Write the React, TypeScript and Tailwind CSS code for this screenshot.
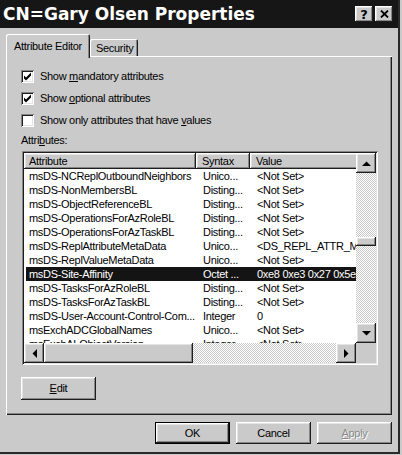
const raised =
  'shadow-[inset_-1px_-1px_#1e1e1e,inset_1px_1px_#ffffff,inset_-2px_-2px_#868686,inset_2px_2px_#e4e4e4]';
const sunken =
  'shadow-[inset_1px_1px_#868686,inset_-1px_-1px_#ffffff,inset_2px_2px_#1e1e1e,inset_-2px_-2px_#e4e4e4]';
const checker =
  'bg-[repeating-conic-gradient(#cacaca_0%_25%,#ffffff_0%_50%)] [background-size:2px_2px]';

const rows = [
  { name: 'msDS-NCReplOutboundNeighbors', syntax: 'Unico...', value: '<Not Set>' },
  { name: 'msDS-NonMembersBL', syntax: 'Disting...', value: '<Not Set>' },
  { name: 'msDS-ObjectReferenceBL', syntax: 'Disting...', value: '<Not Set>' },
  { name: 'msDS-OperationsForAzRoleBL', syntax: 'Disting...', value: '<Not Set>' },
  { name: 'msDS-OperationsForAzTaskBL', syntax: 'Disting...', value: '<Not Set>' },
  { name: 'msDS-ReplAttributeMetaData', syntax: 'Unico...', value: '<DS_REPL_ATTR_META_DATA>' },
  { name: 'msDS-ReplValueMetaData', syntax: 'Unico...', value: '<Not Set>' },
  { name: 'msDS-Site-Affinity', syntax: 'Octet ...', value: '0xe8 0xe3 0x27 0x5e 0x1a', selected: true },
  { name: 'msDS-TasksForAzRoleBL', syntax: 'Disting...', value: '<Not Set>' },
  { name: 'msDS-TasksForAzTaskBL', syntax: 'Disting...', value: '<Not Set>' },
  { name: 'msDS-User-Account-Control-Com...', syntax: 'Integer', value: '0' },
  { name: 'msExchADCGlobalNames', syntax: 'Unico...', value: '<Not Set>' },
  { name: 'msExchALObjectVersion', syntax: 'Integer', value: '<Not Set>' },
];

function Check({ checked, children }: { checked: boolean; children: React.ReactNode }) {
  return (
    <div className="flex items-center h-[13px]">
      <div className={`w-[13px] h-[13px] bg-white ${sunken} flex items-center justify-center`}>
        {checked && (
          <svg width="13" height="13" viewBox="0 0 13 13">
            <polygon points="3,5.5 5,7.5 10,2.5 10,5.5 5,10.5 3,8.5" fill="#000" />
          </svg>
        )}
      </div>
      <span className="ml-[6px] leading-[13px]">{children}</span>
    </div>
  );
}

function Arrow({ dir }: { dir: 'up' | 'down' | 'left' | 'right' }) {
  if (dir === 'up')
    return (
      <svg width="9" height="5" viewBox="0 0 9 5">
        <polygon points="0,5 9,5 4.5,0.5" fill="#000" />
      </svg>
    );
  if (dir === 'down')
    return (
      <svg width="9" height="5" viewBox="0 0 9 5">
        <polygon points="0,0 9,0 4.5,4.5" fill="#000" />
      </svg>
    );
  if (dir === 'left')
    return (
      <svg width="5" height="9" viewBox="0 0 5 9">
        <polygon points="5,0 5,9 0.5,4.5" fill="#000" />
      </svg>
    );
  return (
    <svg width="5" height="9" viewBox="0 0 5 9">
      <polygon points="0,0 0,9 4.5,4.5" fill="#000" />
    </svg>
  );
}

function Button({ children, isDefault }: { children: React.ReactNode; isDefault?: boolean }) {
  return (
    <div
      className={`w-[75px] h-[22px] flex items-center justify-center bg-[#cacaca] ${raised} ${
        isDefault ? 'border border-black' : ''
      }`}
    >
      {children}
    </div>
  );
}

export default function App() {
  return (
    <div className="w-[402px] h-[455px] bg-[#cacaca] font-['Liberation_Sans',Arial,sans-serif] text-[11px] tracking-[-0.3px] text-black overflow-hidden">
      <div className="w-[400px] h-[454px] flex flex-col border-r-2 border-b-2 border-[#2a2a2a]">
        {/* Title bar */}
        <div className="h-[28px] bg-[#161616] flex items-center justify-between pl-[3px] pr-[5px]">
          <span className="font-['DejaVu_Sans',sans-serif] font-bold text-[17px] tracking-normal text-white leading-none">
            CN=Gary Olsen Properties
          </span>
          <div className="flex gap-[2px]">
            <div className={`w-[18px] h-[16px] bg-[#cacaca] ${raised} flex items-center justify-center font-['DejaVu_Sans',sans-serif] font-bold text-[13px] leading-none tracking-normal`}>
              ?
            </div>
            <div className={`w-[18px] h-[16px] bg-[#cacaca] ${raised} flex items-center justify-center`}>
              <svg width="9" height="8" viewBox="0 0 9 8">
                <path d="M1 0.5 L8 7.5 M8 0.5 L1 7.5" stroke="#000" strokeWidth="1.8" />
              </svg>
            </div>
          </div>
        </div>

        {/* Tabs */}
        <div className="flex items-end h-[22px] mt-[6px] ml-[6px]">
          <div className="relative z-10 w-[84px] h-[24px] -mb-[2px] bg-[#cacaca] rounded-t-[2px] shadow-[inset_1px_1px_#ffffff,inset_-1px_0_#1e1e1e,inset_-2px_0_#868686] pl-[8px] pt-[6px] leading-[13px]">
            Attribute Editor
          </div>
          <div className="w-[48px] h-[17px] rounded-t-[2px] shadow-[inset_1px_1px_#ffffff,inset_-1px_0_#1e1e1e,inset_-2px_0_#868686] pl-[6px] pt-[3px] leading-[13px]">
            Security
          </div>
        </div>

        {/* Panel */}
        <div className="ml-[6px] w-[386px] h-[359px] shadow-[inset_1px_1px_#ffffff,inset_-1px_-1px_#1e1e1e,inset_-2px_-2px_#868686] pl-[15px] pt-[14px] flex flex-col">
          <div className="flex flex-col gap-[9px]">
            <Check checked>
              Show <span className="underline">m</span>andatory attributes
            </Check>
            <Check checked>
              Show <span className="underline">o</span>ptional attributes
            </Check>
            <Check checked={false}>
              Show only attributes that have <span className="underline">v</span>alues
            </Check>
          </div>
          <div className="mt-[7px] leading-[13px]">
            Attri<span className="underline">b</span>utes:
          </div>

          {/* List view */}
          <div className={`ml-[1px] mt-[4px] w-[356px] h-[214px] p-[2px] bg-white ${sunken} flex flex-col`}>
            <div className="flex h-[190px]">
              <div className="w-[332px] overflow-hidden bg-white">
                <div className="flex h-[16px] leading-[16px]">
                  <div className={`w-[172px] shrink-0 bg-[#cacaca] ${raised} pl-[5px]`}>Attribute</div>
                  <div className={`w-[54px] shrink-0 bg-[#cacaca] ${raised} pl-[6px]`}>Syntax</div>
                  <div className={`w-[120px] shrink-0 bg-[#cacaca] ${raised} pl-[6px]`}>Value</div>
                </div>
                {rows.map((r) => (
                  <div key={r.name} className="flex h-[14px] leading-[14px] pl-[2px] whitespace-nowrap">
                    <div className={`flex flex-1 ${r.selected ? 'bg-[#141414] text-white' : ''}`}>
                      <div className="w-[170px] shrink-0 pl-[3px] overflow-hidden">{r.name}</div>
                      <div className="w-[54px] shrink-0 pl-[7px] overflow-hidden">{r.syntax}</div>
                      <div className="flex-1 pl-[7px] overflow-hidden">{r.value}</div>
                    </div>
                  </div>
                ))}
              </div>
              {/* vertical scrollbar */}
              <div className="w-[20px] flex flex-col">
                <div className={`h-[20px] bg-[#cacaca] ${raised} flex items-center justify-center`}>
                  <Arrow dir="up" />
                </div>
                <div className={`flex-1 ${checker} flex flex-col`}>
                  <div className={`mt-[64px] h-[9px] bg-[#cacaca] ${raised}`} />
                </div>
                <div className={`h-[20px] bg-[#cacaca] ${raised} flex items-center justify-center`}>
                  <Arrow dir="down" />
                </div>
              </div>
            </div>
            {/* horizontal scrollbar */}
            <div className="flex h-[20px]">
              <div className="w-[332px] flex">
                <div className={`w-[20px] bg-[#cacaca] ${raised} flex items-center justify-center`}>
                  <Arrow dir="left" />
                </div>
                <div className={`flex-1 ${checker} flex`}>
                  <div className={`w-[149px] bg-[#cacaca] ${raised}`} />
                </div>
                <div className={`w-[20px] bg-[#cacaca] ${raised} flex items-center justify-center`}>
                  <Arrow dir="right" />
                </div>
              </div>
              <div className="w-[20px] bg-[#cacaca]" />
            </div>
          </div>

          <div className="mt-[12px]">
            <div className={`w-[75px] h-[23px] flex items-center justify-center bg-[#cacaca] ${raised}`}>
              <span>
                <span className="underline">E</span>dit
              </span>
            </div>
          </div>
        </div>

        {/* Dialog buttons */}
        <div className="flex justify-end gap-[6px] mt-[7px] pr-[6px]">
          <Button isDefault>OK</Button>
          <Button>Cancel</Button>
          <Button>
            <span className="text-[#8a8a8a] [text-shadow:1px_1px_#ffffff]">
              <span className="underline">A</span>pply
            </span>
          </Button>
        </div>
      </div>
    </div>
  );
}
